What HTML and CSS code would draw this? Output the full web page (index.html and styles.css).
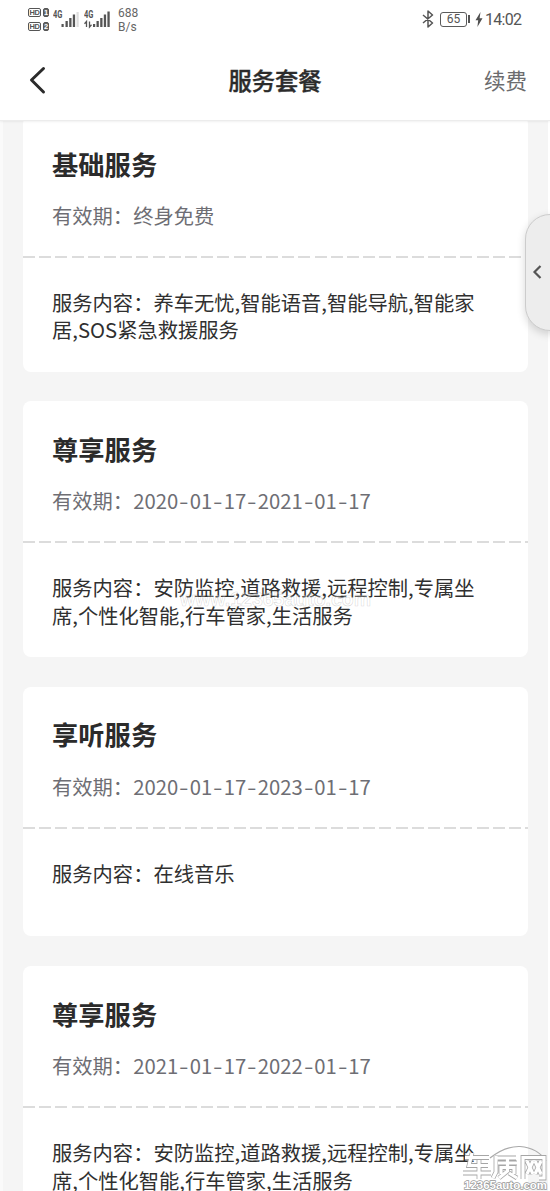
FILE: index.html
```html
<!DOCTYPE html>
<html lang="zh-CN">
<head>
<meta charset="utf-8">
<title>服务套餐</title>
<link rel="stylesheet" href="styles.css">
</head>
<body>
<div class="screen">
  <header class="top">
    <div class="status">
      <div class="status-left">
        <div class="hd-col">
          <div class="hd"><b>HD</b><i>1</i></div>
          <div class="hd"><b>HD</b><i>2</i></div>
        </div>
        <div class="signal">
          <span class="gen">4G</span>
          <svg width="26" height="20" viewBox="0 0 26 20"><g fill="#555"><rect x="8.500" y="14" width="2.200" height="3"/><rect x="12.500" y="11" width="2.300" height="6"/><rect x="16.200" y="8" width="2.300" height="9"/><rect x="19.800" y="4.500" width="2.300" height="12.500"/></g><rect x="23.500" y="2" width="2.200" height="15" fill="#ddd"/></svg>
        </div>
        <div class="signal second">
          <span class="gen">4G</span>
          <svg width="26" height="20" viewBox="0 0 26 20"><path d="M2.500 17v-5.500l-2 2.200M5.500 11.500V17l2-2.200" fill="none" stroke="#555" stroke-width="1.300"/><g fill="#555"><rect x="9" y="14" width="2.200" height="3"/><rect x="12.500" y="11" width="2.300" height="6"/><rect x="16.200" y="8" width="2.300" height="9"/><rect x="19.800" y="4.500" width="2.300" height="12.500"/><rect x="23.400" y="1.500" width="2.300" height="15.500"/></g></svg>
        </div>
        <div class="speed"><span>688</span><span>B/s</span></div>
      </div>
      <div class="status-right">
        <svg class="bt" width="12" height="18" viewBox="0 0 12 18"><path d="M1 5l9.500 8L6 17V1l4.500 4L1 13" fill="none" stroke="#555" stroke-width="1.500" stroke-linejoin="round"/></svg>
        <div class="battery">65</div>
        <span class="battery-tip"></span>
        <svg class="bolt" width="8" height="15" viewBox="0 0 8 15"><path d="M5.500 0L.5 8.200h2.700L2.400 15l5.100-8.700H4.600z" fill="#505050"/></svg>
        <span class="clock">14:02</span>
      </div>
    </div>
    <nav class="nav">
      <svg width="20" height="30" viewBox="0 0 20 30"><path d="M16.500 3.500L4.500 15l12 12" fill="none" stroke="#2b2b2b" stroke-width="3" stroke-linecap="round" stroke-linejoin="round"/></svg>
      <h1>服务套餐</h1>
      <span class="renew">续费</span>
    </nav>
  </header>

  <main class="list">
    <section class="card">
      <div class="head"><h2>基础服务</h2><p class="valid">有效期：终身免费</p></div>
      <div class="rule"></div>
      <p class="body">服务内容：养车无忧,智能语音,智能导航,智能家居,SOS紧急救援服务</p>
    </section>
    <section class="card">
      <div class="head"><h2>尊享服务</h2><p class="valid">有效期：<span class="date">2020<s>-</s>01<s>-</s>17<s>-</s>2021<s>-</s>01<s>-</s>17</span></p></div>
      <div class="rule"></div>
      <p class="body">服务内容：安防监控,道路救援,远程控制,专属坐席,个性化智能,行车管家,生活服务</p>
      <span class="mark">www.12365auto.com</span>
    </section>
    <section class="card">
      <div class="head"><h2>享听服务</h2><p class="valid">有效期：<span class="date">2020<s>-</s>01<s>-</s>17<s>-</s>2023<s>-</s>01<s>-</s>17</span></p></div>
      <div class="rule"></div>
      <p class="body">服务内容：在线音乐</p>
    </section>
    <section class="card">
      <div class="head"><h2>尊享服务</h2><p class="valid">有效期：<span class="date">2021<s>-</s>01<s>-</s>17<s>-</s>2022<s>-</s>01<s>-</s>17</span></p></div>
      <div class="rule"></div>
      <p class="body">服务内容：安防监控,道路救援,远程控制,专属坐席,个性化智能,行车管家,生活服务</p>
    </section>
  </main>

  <div class="drawer">
    <svg width="10" height="16" viewBox="0 0 10 16"><path d="M8.500 2L2.500 8l6 6" fill="none" stroke="#555" stroke-width="2.200"/></svg>
  </div>

  <div class="logo">
    <svg width="90" height="47" viewBox="0 0 90 47">
      <path d="M30 14Q45 2 60 2.500Q78 4 86 17" fill="none" stroke="#aaa" stroke-width="1.200"/>
      <g fill="none" stroke-linejoin="miter">
        <g stroke="#a6a6a6" stroke-width="4.800"><path d="M5 13.500H29M12 9L9 21.500H28M3 29H31M19 16V35"/><path d="M35 14H56M36 12V28L33 34M38 19H57M41 30V23.500H54V30M47.500 14V27L39 34M49 29L57 34"/><path d="M63 35V13.500H84V34H79M67 17L73 30M73 17L67 30M75 17L81 30M81 17L75 30"/></g>
        <g stroke="#fff" stroke-width="3.200"><path d="M5 13.500H29M12 9L9 21.500H28M3 29H31M19 16V35"/><path d="M35 14H56M36 12V28L33 34M38 19H57M41 30V23.500H54V30M47.500 14V27L39 34M49 29L57 34"/><path d="M63 35V13.500H84V34H79M67 17L73 30M73 17L67 30M75 17L81 30M81 17L75 30"/></g>
      </g>
      <text x="4" y="44.500" textLength="83" lengthAdjust="spacingAndGlyphs" class="logo-url">12365auto.com</text>
    </svg>
  </div>
</div>
</body>
</html>
```

FILE: styles.css
```css
* { box-sizing: border-box; }
body, h1, h2, p { margin: 0; }
body { font-family: "Noto Sans CJK SC", sans-serif; background: #f5f5f5; }

.screen {
  position: relative;
  width: 550px;
  height: 1191px;
  overflow: hidden;
  background: linear-gradient(90deg, #fafafa 3px, #f5f5f5 3px, #f5f5f5 548px, #fff 548px);
}

.top {
  position: relative;
  z-index: 2;
  height: 121px;
  background: #fff;
  border-bottom: 1px solid #ececec;
  box-shadow: 0 1px 2px rgba(0, 0, 0, .06);
}

.status {
  display: flex;
  justify-content: space-between;
  height: 40px;
  padding: 0 27px 0 28px;
  color: #555;
}
.status-left, .status-right { display: flex; align-items: flex-start; }
.hd-col { display: flex; flex-direction: column; gap: 5px; padding-top: 8px; width: 21px; }
.hd { display: flex; gap: 2px; height: 9px; }
.hd b, .hd i {
  font: bold 7.500px/7px "Liberation Sans", sans-serif;
  border: 1px solid #555;
  border-radius: 2px;
  text-align: center;
}
.hd b { width: 13px; letter-spacing: -.3px; }
.hd i { width: 6px; background: #666; color: #fff; }
.signal { position: relative; width: 26px; height: 28px; margin: 10px 0 0 4px; }
.signal.second { margin-left: 5px; }
.signal svg { display: block; }
.gen { position: absolute; left: 0; top: 0; font: bold 10px/10px Roboto, sans-serif; transform: scaleX(.75); transform-origin: left; }
.speed { display: flex; flex-direction: column; margin: 6px 0 0 8px; font: 12px/14px Roboto, sans-serif; color: #666; }

.bt { margin-top: 10px; }
.battery {
  width: 27px;
  height: 15px;
  margin: 12px 0 0 6px;
  border: 1.500px solid #5a5a5a;
  border-radius: 3px;
  font: 12px/13px Roboto, sans-serif;
  text-align: center;
}
.battery-tip { width: 2px; height: 8px; margin: 15px 0 0 1px; background: #555; }
.bolt { margin: 12px 0 0 5px; }
.clock { margin: 10px 0 0 2px; font: 16px/20px Roboto, sans-serif; letter-spacing: -.7px; width: 38px; white-space: nowrap; }

.nav {
  display: grid;
  grid-template-columns: 1fr auto 1fr;
  align-items: center;
  height: 80px;
  padding: 0 23px 0 27px;
}
.nav h1 { position: relative; left: -2px; font-size: 23.300px; line-height: 34px; font-weight: 500; -webkit-text-stroke: .4px #2b2b2b; color: #2b2b2b; }
.renew { justify-self: end; font-size: 21.500px; line-height: 32px; font-weight: 400; color: #6c6c6e; }

.list { display: flex; flex-direction: column; gap: 29.900px; margin: -5px 22px 0 23px; }
.card { position: relative; background: #fff; border-radius: 8px; flex: none; }
.head { height: 140px; padding: 28.500px 29px 0; }
.head h2 { font-size: 26.300px; line-height: 38px; font-weight: 700; color: #2b2b2b; }
.valid { margin-top: 18.500px; font-size: 20.300px; line-height: 28px; font-weight: 400; color: #6e6e74; white-space: nowrap; }
.date s { display: inline-block; width: 11.500px; text-align: center; text-decoration: none; transform: scaleX(1.350); }
.rule { height: 2px; background: repeating-linear-gradient(90deg, #dcdcdc 0 12px, transparent 12px 16.200px); }
.body {
  min-height: 107.400px;
  padding: 31px 35px 28px 29px;
  font-size: 20.300px;
  line-height: 27.300px;
  color: #303030;
  word-break: break-all;
}
.mark {
  position: absolute;
  left: 157px;
  top: 187px;
  font: bold 19.500px/22px "Liberation Sans", sans-serif;
  color: rgba(255, 255, 255, .25);
  -webkit-text-stroke: .6px rgba(120, 120, 120, .28);
}

.drawer {
  position: absolute;
  z-index: 3;
  left: 525px;
  top: 214px;
  width: 50px;
  height: 117px;
  padding: 49px 0 0 6px;
  background: #ededed;
  border: 1.500px solid #ccc;
  border-radius: 26px;
  box-shadow: 0 3px 8px rgba(0, 0, 0, .16);
}
.drawer svg { display: block; }

.logo { position: absolute; z-index: 3; right: 0; bottom: 0; width: 90px; height: 47px; }
.logo svg { display: block; }
.logo-url { font: bold 11px "Liberation Sans", sans-serif; fill: #fff; stroke: #999; stroke-width: 1.400px; paint-order: stroke; }
```
